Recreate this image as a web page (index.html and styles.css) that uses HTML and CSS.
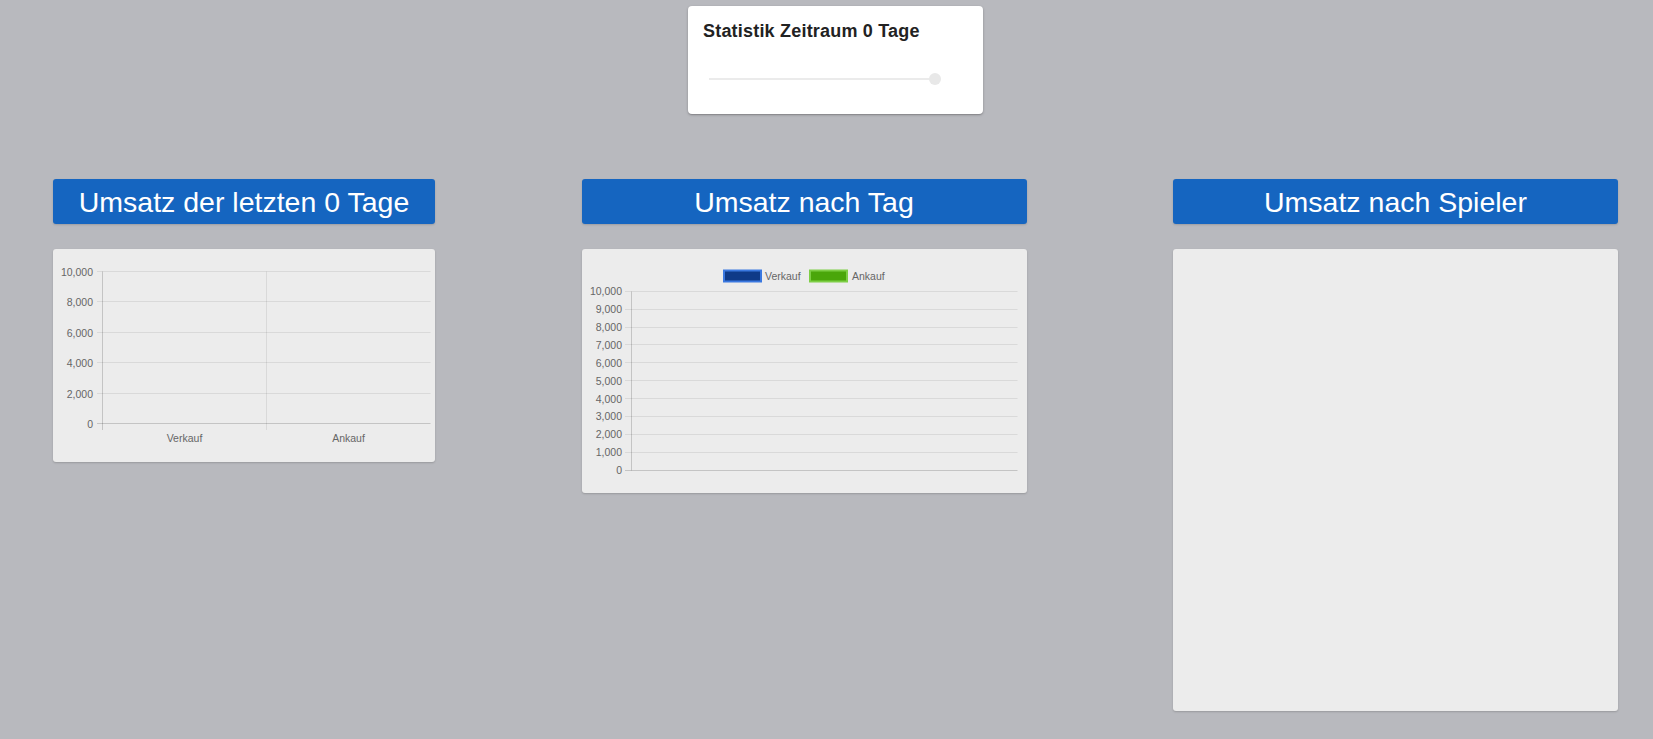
FILE: index.html
```html
<!DOCTYPE html>
<html lang="de">

<head>
	<meta charset="UTF-8">
	<meta name="viewport" content="width=device-width, initial-scale=1.0">
	<title>Statistik</title>
	<link rel="stylesheet" href="styles.css">
</head>

<body>
	<div class="range-bar">
		<div class="range-card">
			<h2 class="range-title">Statistik Zeitraum 0 Tage</h2>
			<div class="slider">
				<div class="slider-track"></div>
				<div class="slider-thumb"></div>
			</div>
		</div>
	</div>

	<div class="stats-grid">
		<section class="stat-col">
			<h1 class="stat-head">Umsatz der letzten 0 Tage</h1>
			<div class="chart-card chart-total">
				<svg class="chart" width="382" height="213" viewBox="0 0 382 213">
					<g class="grid">
						<line x1="44" y1="22.5" x2="377.5" y2="22.5" />
						<line x1="44" y1="52.5" x2="377.5" y2="52.5" />
						<line x1="44" y1="83.5" x2="377.5" y2="83.5" />
						<line x1="44" y1="113.5" x2="377.5" y2="113.5" />
						<line x1="44" y1="144.5" x2="377.5" y2="144.5" />
						<line x1="213.5" y1="22.5" x2="213.5" y2="181" />
					</g>
					<g class="axis">
						<line x1="44" y1="174.5" x2="377.5" y2="174.5" />
						<line x1="49.5" y1="22.5" x2="49.5" y2="181" />
					</g>
					<g class="tick-y">
						<text x="40" y="26.5">10,000</text>
						<text x="40" y="56.5">8,000</text>
						<text x="40" y="87.5">6,000</text>
						<text x="40" y="117.5">4,000</text>
						<text x="40" y="148.5">2,000</text>
						<text x="40" y="178.5">0</text>
					</g>
					<g class="tick-x">
						<text x="131.5" y="193">Verkauf</text>
						<text x="295.5" y="193">Ankauf</text>
					</g>
				</svg>
			</div>
		</section>

		<section class="stat-col">
			<h1 class="stat-head">Umsatz nach Tag</h1>
			<div class="chart-card chart-daily">
				<svg class="chart" width="445" height="244" viewBox="0 0 445 244">
					<g class="legend">
						<rect class="box-sell" x="142" y="21.5" width="37" height="11" />
						<text x="183" y="31">Verkauf</text>
						<rect class="box-buy" x="228" y="21.5" width="37" height="11" />
						<text x="270" y="31">Ankauf</text>
					</g>
					<g class="grid">
						<line x1="43" y1="42.5" x2="435.5" y2="42.5" />
						<line x1="43" y1="60.5" x2="435.5" y2="60.5" />
						<line x1="43" y1="78.5" x2="435.5" y2="78.5" />
						<line x1="43" y1="95.5" x2="435.5" y2="95.5" />
						<line x1="43" y1="113.5" x2="435.5" y2="113.5" />
						<line x1="43" y1="131.5" x2="435.5" y2="131.5" />
						<line x1="43" y1="149.5" x2="435.5" y2="149.5" />
						<line x1="43" y1="167.5" x2="435.5" y2="167.5" />
						<line x1="43" y1="185.5" x2="435.5" y2="185.5" />
						<line x1="43" y1="203.5" x2="435.5" y2="203.5" />
					</g>
					<g class="axis">
						<line x1="43" y1="221.5" x2="435.5" y2="221.5" />
						<line x1="49.5" y1="42.5" x2="49.5" y2="221.5" />
					</g>
					<g class="tick-y">
						<text x="40" y="46">10,000</text>
						<text x="40" y="64">9,000</text>
						<text x="40" y="82">8,000</text>
						<text x="40" y="99.5">7,000</text>
						<text x="40" y="117.5">6,000</text>
						<text x="40" y="135.5">5,000</text>
						<text x="40" y="153.5">4,000</text>
						<text x="40" y="171">3,000</text>
						<text x="40" y="189">2,000</text>
						<text x="40" y="207">1,000</text>
						<text x="40" y="225">0</text>
					</g>
				</svg>
			</div>
		</section>

		<section class="stat-col">
			<h1 class="stat-head">Umsatz nach Spieler</h1>
			<div class="chart-card chart-player"></div>
		</section>
	</div>
</body>

</html>
```

FILE: styles.css
```css
:root {
	--page-bg: #b8b9be;
	--head-blue: #1565c0;
	--card-bg: #ececec;
	--label: #666666;
}

* {
	margin: 0;
	padding: 0;
	box-sizing: border-box;
}

body {
	background-color: var(--page-bg);
	font-family: 'Liberation Sans', Arial, sans-serif;
	min-height: 100vh;
}

/* zeitraum auswahl */
.range-bar {
	display: flex;
	justify-content: center;
	padding: 6px 0 0 18px;
}

.range-card {
	width: 295px;
	height: 108px;
	background-color: #ffffff;
	border-radius: 4px;
	box-shadow: 0 1px 3px rgba(0, 0, 0, 0.2), 0 1px 1px rgba(0, 0, 0, 0.14);
	padding: 15px 15px 0;
}

.range-title {
	font-size: 18px;
	font-weight: 700;
	letter-spacing: 0.2px;
	color: #222222;
	line-height: 21px;
}

.slider {
	position: relative;
	margin: 30px 0 0 6px;
	width: 232px;
	height: 14px;
	display: flex;
	align-items: center;
}

.slider-track {
	width: 226px;
	height: 2px;
	background-color: #ebebeb;
}

.slider-thumb {
	position: absolute;
	left: 220px;
	top: 1px;
	width: 12px;
	height: 12px;
	border-radius: 50%;
	background-color: #e8e8e8;
}

/* auswertungen */
.stats-grid {
	display: grid;
	grid-template-columns: 382px 445px 445px;
	column-gap: 146.5px;
	padding-left: 53px;
	margin-top: 65px;
	align-items: start;
}

.stat-col {
	display: flex;
	flex-direction: column;
	gap: 25px;
}

.stat-head {
	height: 45px;
	background-color: var(--head-blue);
	color: #ffffff;
	font-size: 28.5px;
	font-weight: 400;
	line-height: 47px;
	text-align: center;
	border-radius: 3px;
	box-shadow: 0 1px 2px rgba(0, 0, 0, 0.15);
}

.chart-card {
	background-color: var(--card-bg);
	border-radius: 3px;
	box-shadow: 0 1px 2px rgba(0, 0, 0, 0.18);
}

.chart-total {
	height: 213px;
}

.chart-daily {
	height: 244px;
}

.chart-player {
	height: 462px;
}

.chart {
	display: block;
}

.chart .grid line {
	stroke: rgba(0, 0, 0, 0.08);
	stroke-width: 1;
}

.chart .axis line {
	stroke: rgba(0, 0, 0, 0.17);
	stroke-width: 1;
}

.chart text {
	font-family: 'Liberation Sans', Arial, sans-serif;
	font-size: 10.5px;
	fill: var(--label);
}

.tick-y text {
	text-anchor: end;
}

.tick-x text {
	text-anchor: middle;
}

.legend .box-sell {
	fill: #0f3a88;
	stroke: #3a78e0;
	stroke-width: 2;
}

.legend .box-buy {
	fill: #4aa60a;
	stroke: #7dce45;
	stroke-width: 2;
}
```
